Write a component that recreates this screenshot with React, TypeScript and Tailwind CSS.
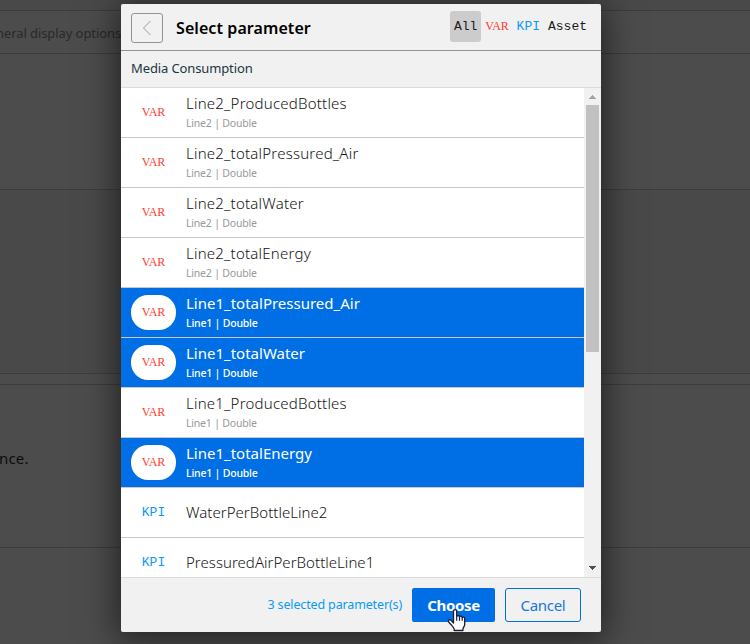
import React from "react";

type Kind = "VAR" | "KPI";
interface Parameter {
  kind: Kind;
  name: string;
  detail?: string;
  selected?: boolean;
}

const parameters: Parameter[] = [
  { kind: "VAR", name: "Line2_ProducedBottles", detail: "Line2 | Double" },
  { kind: "VAR", name: "Line2_totalPressured_Air", detail: "Line2 | Double" },
  { kind: "VAR", name: "Line2_totalWater", detail: "Line2 | Double" },
  { kind: "VAR", name: "Line2_totalEnergy", detail: "Line2 | Double" },
  { kind: "VAR", name: "Line1_totalPressured_Air", detail: "Line1 | Double", selected: true },
  { kind: "VAR", name: "Line1_totalWater", detail: "Line1 | Double", selected: true },
  { kind: "VAR", name: "Line1_ProducedBottles", detail: "Line1 | Double" },
  { kind: "VAR", name: "Line1_totalEnergy", detail: "Line1 | Double", selected: true },
  { kind: "KPI", name: "WaterPerBottleLine2" },
  { kind: "KPI", name: "PressuredAirPerBottleLine1" },
];

function Backdrop() {
  return (
    <div className="flex h-[644px] flex-col bg-[#4c4c4c]">
      <div className="h-[11px] shrink-0 border-b border-[#3c3c3c] bg-[#494949]" />
      <div className="flex h-[43px] shrink-0 items-center border-b border-[#3c3c3c] pt-[2px]">
        <span className="-ml-[4px] whitespace-nowrap text-[13px] leading-[20px] tracking-[-0.08px] text-[#292929]">neral display options</span>
      </div>
      <div className="h-[136px] shrink-0 border-b border-[#3c3c3c]" />
      <div className="h-[184px] shrink-0 border-b border-[#3c3c3c] bg-[#494949]" />
      <div className="h-[11px] shrink-0 border-b border-[#3c3c3c]" />
      <div className="h-[163px] shrink-0 border-b border-[#3c3c3c] pt-[62px]">
        <span className="-ml-px block text-[15px] leading-[22px] tracking-[0.15px] text-[#0c0c0c]">nce.</span>
      </div>
    </div>
  );
}

function KindLabel({ kind }: { kind: Kind }) {
  return kind === "VAR" ? (
    <span className="font-['Liberation_Serif',serif] text-[12px] leading-[15px] tracking-[-0.1px] text-[#ff3b30]">VAR</span>
  ) : (
    <span className="font-['Liberation_Mono',monospace] text-[13px] leading-[15px] text-[#0a9bf5]">KPI</span>
  );
}

function Row({ item }: { item: Parameter }) {
  return (
    <li
      className={`flex h-[50px] shrink-0 items-center border-b border-[#c8c8c8] pl-[10px] ${
        item.selected ? "bg-[#006fe6] text-white" : "bg-white text-[#141414]"
      }`}
    >
      <span className="flex h-[35px] w-[45px] items-center justify-center rounded-[17px] bg-white">
        <KindLabel kind={item.kind} />
      </span>
      <span className={`ml-[10px] flex flex-col gap-px whitespace-nowrap ${item.detail ? "pb-[3px]" : "pb-[2px]"}`}>
        <span
          className={`text-[15px] leading-[22px] ${
            item.selected ? "font-normal" : item.detail ? "font-light tracking-[0.22px]" : "font-light tracking-[0.03px]"
          }`}
        >
          {item.name}
        </span>
        {item.detail && (
          <span
            className={`text-[10.5px] leading-[16px] tracking-[-0.2px] ${
              item.selected ? "font-medium text-white" : "text-[#999999]"
            }`}
          >
            {item.detail}
          </span>
        )}
      </span>
    </li>
  );
}

function Scrollbar() {
  return (
    <div className="flex w-[17px] flex-col items-center bg-[#f1f1f1]">
      <svg className="h-[17px] w-[17px] shrink-0" viewBox="0 0 17 17" shapeRendering="crispEdges">
        <path d="M5 11h7L8.5 7z" fill="#a3a3a3" />
      </svg>
      <div className="h-[247px] w-[13px] shrink-0 bg-[#c1c1c1]" />
      <svg className="mt-auto h-[17px] w-[17px] shrink-0" viewBox="0 0 17 17" shapeRendering="crispEdges">
        <path d="M5 6h7L8.5 10z" fill="#505050" />
      </svg>
    </div>
  );
}

function HandCursor() {
  return (
    <svg className="absolute left-[35px] top-[20px] h-[25px] w-[20px]" viewBox="0 0 20 25">
      <path
        d="M6.5 15V3.2c0-2.2 3.2-2.2 3.2 0v5.4c.5-1.6 2.7-1.4 2.8.3.6-1.2 2.6-1 2.7.7.8-1 2.5-.5 2.5 1.1v5.8c0 1.8-1.8 3.1-1.8 5v1H7.2v-1c0-1.6-1.6-2.6-2.5-4.3L1.6 14c-.9-1.7 1-3 2.4-1.6z"
        fill="white"
        stroke="#1b1b35"
        strokeWidth="1.3"
        strokeLinejoin="round"
      />
      <path d="M9.7 8.5v4.3M12.5 9v3.8M15.2 9.7v3.1" fill="none" stroke="#1b1b35" strokeWidth="1.2" />
    </svg>
  );
}

function Dialog() {
  return (
    <section className="absolute left-[121px] top-[4px] flex h-[628px] w-[480px] flex-col overflow-hidden rounded-[2px] bg-[#f1f1f1]">
      <header className="flex h-[47px] shrink-0 items-center border-b border-[#929292] pl-[10px] pr-[14px]">
        <button className="mt-[2px] flex h-[30px] w-[32px] items-center justify-center rounded-[3px] border border-[#929292]">
          <svg className="h-[16px] w-[10px]" viewBox="0 0 10 16" fill="none" stroke="#999999">
            <path d="M8.5 1L1.5 8l7 7" />
          </svg>
        </button>
        <h1 className="ml-[13px] mt-[2px] text-[16px] font-semibold leading-[24px] tracking-[0.08px] text-black">Select parameter</h1>
        <nav className="mb-px ml-auto flex items-center font-['Liberation_Mono',monospace] text-[13px] leading-[15px] text-[#1a1a1a]">
          <span className="flex h-[31px] w-[31px] items-center justify-center rounded-[3px] bg-[#cccccc]">All</span>
          <span className="ml-[4px] flex w-[23.4px] justify-center">
            <KindLabel kind="VAR" />
          </span>
          <span className="ml-[8px] flex">
            <KindLabel kind="KPI" />
          </span>
          <span className="ml-[8px]">Asset</span>
        </nav>
      </header>
      <div className="flex h-[37px] shrink-0 items-center border-b border-[#dcdcdc] pb-[2px] pl-[10px] text-[13px] leading-[20px] tracking-[-0.12px] text-[#1c3641]">
        <span>Media Consumption</span>
      </div>
      <div className="flex h-[489px] shrink-0">
        <ul className="flex min-w-0 flex-1 flex-col overflow-hidden bg-white">
          {parameters.map((item) => (
            <Row key={item.name} item={item} />
          ))}
        </ul>
        <Scrollbar />
      </div>
      <footer className="flex flex-1 items-center border-t border-[#dcdcdc] pr-[20px]">
        <span className="ml-auto text-[12.5px] leading-[20px] tracking-[-0.14px] text-[#0a9bf5]">3 selected parameter(s)</span>
        <button className="relative ml-[10px] h-[34px] w-[83px] rounded-[2px] bg-[#006fe6] text-[15px] font-bold tracking-[-0.35px] text-white">
          Choose
          <HandCursor />
        </button>
        <button className="ml-[10px] h-[34px] w-[76px] rounded-[3px] border border-[#006fe6] text-[15px] tracking-[-0.3px] text-[#1976df]">
          Cancel
        </button>
      </footer>
    </section>
  );
}

export default function App() {
  return (
    <main className="relative h-[644px] w-[750px] overflow-hidden font-['Noto_Sans',sans-serif]">
      <Backdrop />
      <div className="absolute left-[121px] top-[4px] h-[628px] w-[480px] shadow-[0_4px_32px_4px_rgba(0,0,0,0.55)]" />
      <Dialog />
    </main>
  );
}
